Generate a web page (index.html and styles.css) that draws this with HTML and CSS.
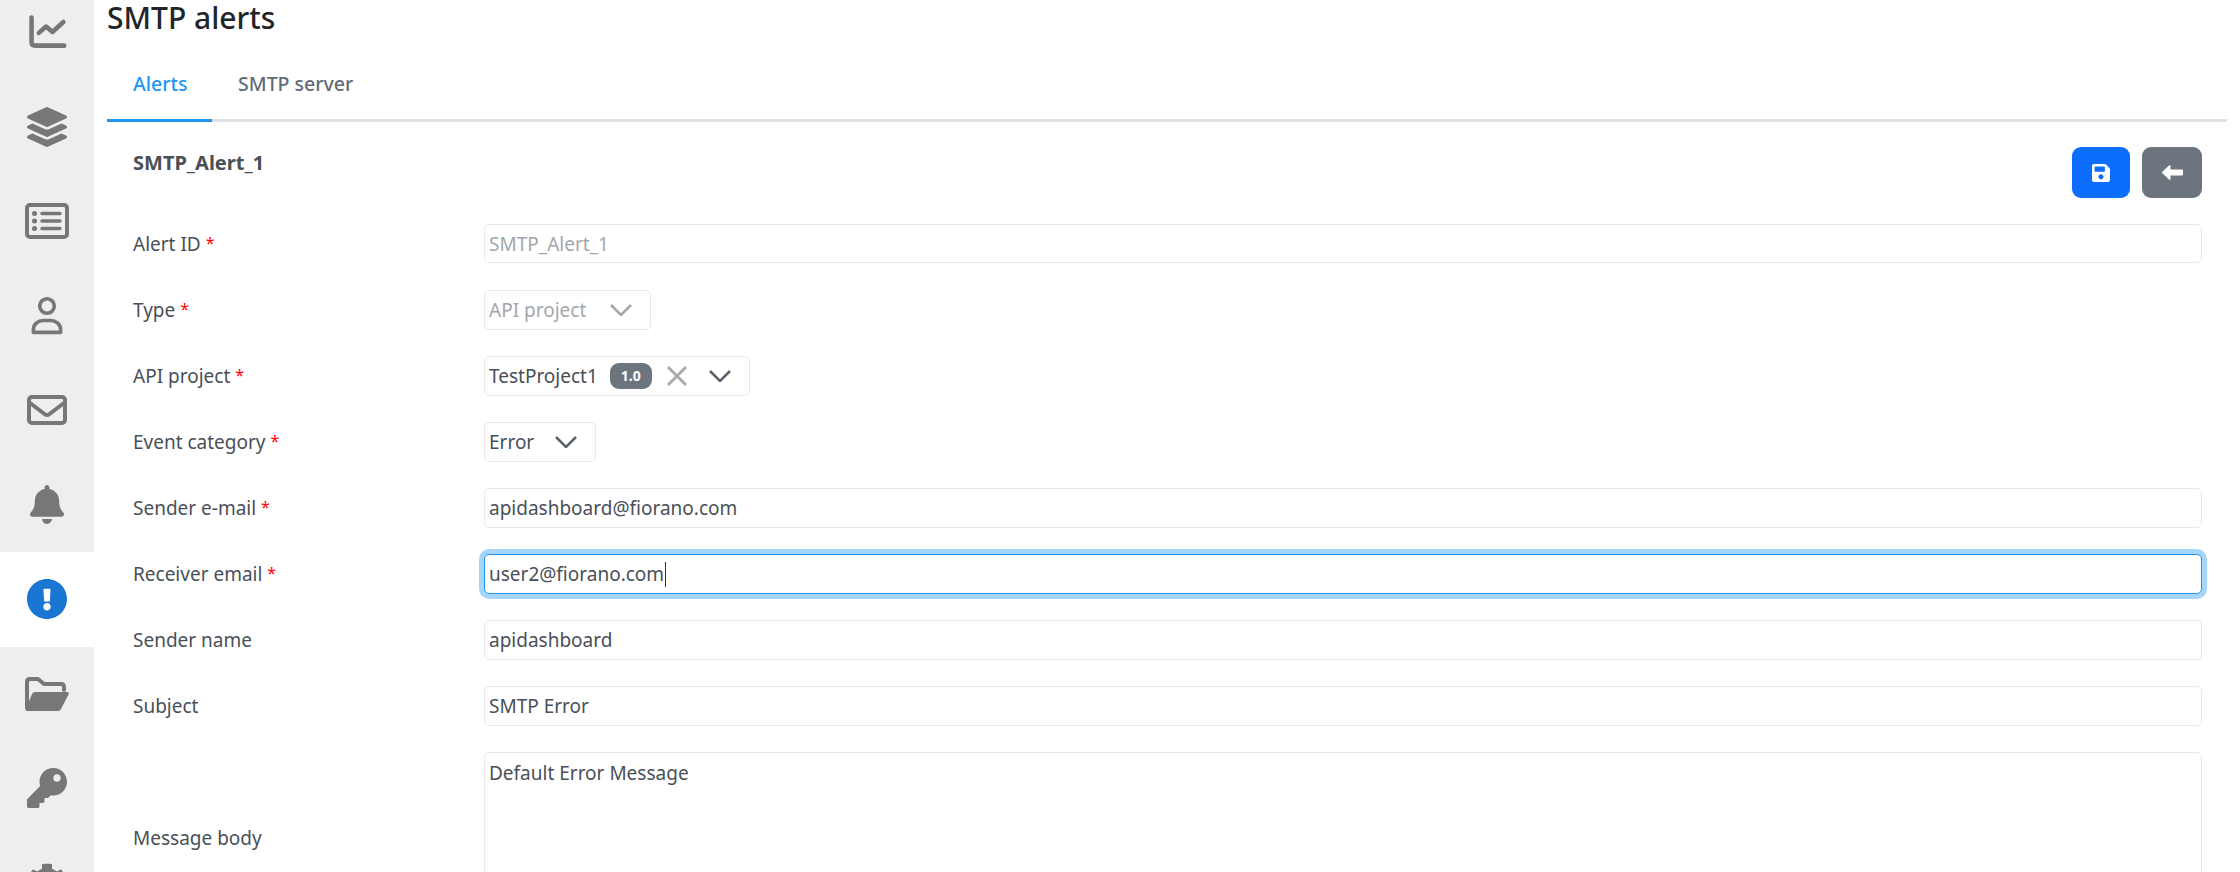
FILE: index.html
```html
<!DOCTYPE html>
<html lang="en">
<head>
<meta charset="utf-8">
<title>SMTP alerts</title>
<link rel="stylesheet" href="styles.css">
</head>
<body>
<div class="app">
  <nav class="sidebar">
    <a class="nav-item"><svg class="ico" viewBox="0 0 44 40"><path class="st" d="M5 4V31q0 4 4 4H41" stroke-width="5"/><path class="st" d="M13 21l8-7 7 6 12-11" stroke-width="5"/></svg></a>
    <a class="nav-item"><svg class="ico" viewBox="0 0 512 512"><path d="M12.41 148.02l232.94 105.67c6.8 3.09 14.49 3.09 21.29 0l232.94-105.67c16.55-7.51 16.55-32.52 0-40.03L266.65 2.31a25.607 25.607 0 0 0-21.29 0L12.41 107.98c-16.55 7.51-16.55 32.53 0 40.04zm487.18 88.28l-58.09-26.33-161.64 73.27c-7.56 3.43-15.59 5.17-23.86 5.17s-16.29-1.74-23.86-5.17L70.51 209.97l-58.1 26.33c-16.55 7.5-16.55 32.5 0 40l232.94 105.59c6.8 3.08 14.49 3.08 21.29 0L499.59 276.3c16.55-7.5 16.55-32.5 0-40zm0 127.8l-57.87-26.23-161.86 73.37c-7.56 3.43-15.59 5.17-23.86 5.17s-16.29-1.74-23.86-5.17L70.29 337.87 12.41 364.1c-16.55 7.5-16.55 32.5 0 40l232.94 105.59c6.8 3.08 14.49 3.08 21.29 0L499.59 404.1c16.55-7.5 16.55-32.5 0-40z"/></svg></a>
    <a class="nav-item"><svg class="ico ico-wide" viewBox="0 0 44 36"><rect class="st" x="2" y="2" width="40" height="32" rx="3" stroke-width="4"/><circle cx="9.5" cy="10.500" r="2.500"/><circle cx="9.5" cy="18" r="2.500"/><circle cx="9.5" cy="25.500" r="2.500"/><path class="st" d="M17 10.500H35M17 18H35M17 25.500H35" stroke-width="3.500"/></svg></a>
    <a class="nav-item"><svg class="ico" viewBox="0 0 44 44"><circle class="st" cx="22" cy="11" r="8" stroke-width="4"/><path class="st" d="M7 40v-3c0-6 5-10 11-10h8c6 0 11 4 11 10v3z" stroke-width="4"/></svg></a>
    <a class="nav-item"><svg class="ico" viewBox="0 0 40 30"><rect class="st" x="2" y="2" width="36" height="26" rx="3" stroke-width="4"/><path class="st" d="M3 8l14.500 11q2.500 2 5 0L37 8" stroke-width="4"/></svg></a>
    <a class="nav-item"><svg class="ico ico-bell" viewBox="0 0 448 512"><path d="M224 512c35.32 0 63.97-28.65 63.97-64H160.03c0 35.35 28.65 64 63.97 64zm215.39-149.71c-19.32-20.76-55.47-51.99-55.47-154.29 0-77.7-54.48-139.9-127.94-155.16V32c0-17.67-14.32-32-31.98-32s-31.98 14.33-31.98 32v20.84C118.56 68.1 64.08 130.3 64.08 208c0 102.3-36.15 133.53-55.47 154.29-6 6.45-8.66 14.16-8.61 21.71.11 16.4 12.98 32 32.1 32h383.8c19.12 0 32-15.6 32.1-32 .05-7.55-2.61-15.27-8.61-21.71z"/></svg></a>
    <a class="nav-item nav-active"><svg class="ico ico-alert" viewBox="8 8 496 496"><path d="M504 256c0 136.997-111.043 248-248 248S8 392.997 8 256C8 119.083 119.043 8 256 8s248 111.083 248 248zm-248 50c-25.405 0-46 20.595-46 46s20.595 46 46 46 46-20.595 46-46-20.595-46-46-46zm-43.673-165.346l7.418 136c.347 6.364 5.609 11.346 11.982 11.346h48.546c6.373 0 11.635-4.982 11.982-11.346l7.418-136c.375-6.874-5.098-12.654-11.982-12.654h-63.383c-6.884 0-12.356 5.78-11.981 12.654z"/></svg></a>
    <a class="nav-item"><svg class="ico ico-wide" viewBox="0 0 44 34"><path class="st" d="M2 31V5q0-3 3-3h8l6 5h17q3 0 3 3v3" stroke-width="4"/><path d="M10 15h32q2.500 0 1.500 2.500L36 32q-1 2-3 2H2q-2 0-1-2.500L7 17q1-2 3-2z"/></svg></a>
    <a class="nav-item"><svg class="ico" viewBox="0 0 512 512"><path d="M512 176.001C512 273.203 433.202 352 336 352c-11.22 0-22.19-1.062-32.827-3.069l-24.012 27.014A23.999 23.999 0 0 1 261.223 384H224v40c0 13.255-10.745 24-24 24h-40v40c0 13.255-10.745 24-24 24H24c-13.255 0-24-10.745-24-24v-78.059c0-6.365 2.529-12.47 7.029-16.971l161.802-161.802C163.108 213.814 160 195.271 160 176 160 78.798 238.797.001 335.999 0 433.488-.001 512 78.511 512 176.001zM336 128c0 26.51 21.49 48 48 48s48-21.49 48-48-21.49-48-48-48-48 21.49-48 48z"/></svg></a>
    <a class="nav-item"><svg class="ico" viewBox="0 0 512 512"><path d="M487.4 315.7l-42.6-24.6c4.3-23.2 4.3-47 0-70.2l42.6-24.6c4.9-2.8 7.1-8.6 5.5-14-11.1-35.6-30-67.8-54.7-94.6-3.8-4.1-10-5.1-14.8-2.3L380.8 110c-17.9-15.4-38.5-27.3-60.8-35.1V25.8c0-5.6-3.9-10.5-9.4-11.7-36.7-8.2-74.3-7.8-109.2 0-5.5 1.2-9.4 6.1-9.4 11.7V75c-22.2 7.9-42.8 19.8-60.8 35.1L88.7 85.5c-4.9-2.8-11-1.9-14.8 2.3-24.7 26.7-43.6 58.9-54.7 94.6-1.7 5.4.6 11.2 5.5 14L67.3 221c-4.3 23.2-4.3 47 0 70.2l-42.6 24.6c-4.9 2.8-7.1 8.6-5.5 14 11.1 35.6 30 67.8 54.7 94.6 3.8 4.1 10 5.1 14.8 2.3l42.6-24.6c17.9 15.4 38.5 27.3 60.8 35.1v49.2c0 5.6 3.9 10.5 9.4 11.7 36.7 8.2 74.3 7.8 109.2 0 5.5-1.2 9.4-6.1 9.4-11.7v-49.2c22.2-7.9 42.8-19.8 60.8-35.1l42.6 24.6c4.9 2.8 11 1.9 14.8-2.3 24.7-26.7 43.6-58.9 54.7-94.6 1.5-5.5-.7-11.3-5.6-14.1zM256 336c-44.1 0-80-35.9-80-80s35.9-80 80-80 80 35.9 80 80-35.9 80-80 80z"/></svg></a>
  </nav>
  <main class="main">
    <h1 class="page-title">SMTP alerts</h1>
    <div class="tabs">
      <a class="tab tab-active">Alerts</a>
      <a class="tab">SMTP server</a>
    </div>
    <section class="panel">
      <header class="panel-head">
        <h2 class="panel-title">SMTP_Alert_1</h2>
        <div class="actions">
          <button class="btn btn-save" type="button"><svg class="btn-ico" viewBox="0 32 448 448"><path d="M433.941 129.941l-83.882-83.882A48 48 0 0 0 316.118 32H48C21.49 32 0 53.49 0 80v352c0 26.51 21.49 48 48 48h352c26.51 0 48-21.49 48-48V163.882a48 48 0 0 0-14.059-33.941zM224 416c-35.346 0-64-28.654-64-64 0-35.346 28.654-64 64-64s64 28.654 64 64c0 35.346-28.654 64-64 64zm96-304.52V212c0 6.627-5.373 12-12 12H76c-6.627 0-12-5.373-12-12V108c0-6.627 5.373-12 12-12h228.52c3.183 0 6.235 1.264 8.485 3.515l3.48 3.48A11.996 11.996 0 0 1 320 111.48z"/></svg></button>
          <button class="btn btn-back" type="button"><svg class="btn-arrow" viewBox="0 0 21 15"><path d="M.4 6.800L7 .5Q8.500-.6 8.500 1.200V4.500H20q1 0 1 1V9.500q0 1-1 1H8.500v3.300Q8.500 15.600 7 14.500L.4 8.200Q-.3 7.500.4 6.800z"/></svg></button>
        </div>
      </header>
      <div class="form">
        <div class="row">
          <div class="label">Alert ID <span class="req">*</span></div>
          <div class="field field-first is-disabled">SMTP_Alert_1</div>
        </div>
        <div class="row">
          <div class="label">Type <span class="req">*</span></div>
          <div class="field select select-type is-disabled"><span>API project</span><svg class="chev chev-off" viewBox="0 0 22 12"><path d="M1 1l10 10L21 1"/></svg></div>
        </div>
        <div class="row">
          <div class="label">API project <span class="req">*</span></div>
          <div class="field select select-project"><span>TestProject1</span><span class="badge">1.0</span><svg class="clear" viewBox="0 0 20 20"><path d="M1 1l18 18M19 1L1 19"/></svg><svg class="chev" viewBox="0 0 22 12"><path d="M1 1l10 10L21 1"/></svg></div>
        </div>
        <div class="row">
          <div class="label">Event category <span class="req">*</span></div>
          <div class="field select select-event"><span>Error</span><svg class="chev" viewBox="0 0 22 12"><path d="M1 1l10 10L21 1"/></svg></div>
        </div>
        <div class="row">
          <div class="label">Sender e-mail <span class="req">*</span></div>
          <div class="field">apidashboard@fiorano.com</div>
        </div>
        <div class="row">
          <div class="label">Receiver email <span class="req">*</span></div>
          <div class="field is-focused">user2@fiorano.com<span class="caret"></span></div>
        </div>
        <div class="row">
          <div class="label">Sender name</div>
          <div class="field">apidashboard</div>
        </div>
        <div class="row">
          <div class="label">Subject</div>
          <div class="field">SMTP Error</div>
        </div>
        <div class="row row-text">
          <div class="label">Message body</div>
          <div class="field textarea">Default Error Message</div>
        </div>
      </div>
    </section>
  </main>
</div>
</body>
</html>
```
FILE: styles.css
```css
* { box-sizing: border-box; }
html, body { margin: 0; height: 872px; overflow: hidden; background: #fff; }
body { font-family: "Noto Sans", "Open Sans", sans-serif; font-size: 19px; color: #495057; }
.app { display: flex; height: 872px; overflow: hidden; }

.sidebar { width: 94px; flex: none; background: #eeeeee; margin-top: -15px; height: 887px; overflow: hidden; display: flex; flex-direction: column; }
.nav-item { height: 94.5px; flex: none; display: flex; align-items: center; justify-content: center; }
.nav-active { background: #fff; }
.ico { width: 40px; height: 40px; fill: #777777; }
.ico-wide { width: 44px; height: 36px; }
.ico-bell { width: 34px; height: 39px; }
.ico-alert { fill: #1976d2; }
.st { fill: none; stroke: #777777; stroke-linecap: round; stroke-linejoin: round; }

.main { flex: 1; min-width: 0; padding: 0 13px; }
.page-title { margin: 0 0 14px; height: 36px; line-height: 35px; font-size: 30px; font-weight: 500; color: #212529; }

.tabs { display: flex; height: 72px; border-bottom: 3px solid #dee2e6; }
.tab { height: 72px; padding: 0 26px; line-height: 68px; font-size: 19.5px; font-weight: 500; color: #5f6b76; border-bottom: 3px solid transparent; }
.tab-active { width: 105px; flex: none; color: #2196f3; border-bottom-color: #2196f3; }

.panel { padding: 25px 25px 0 26px; }
.panel-head { display: flex; justify-content: space-between; align-items: flex-start; height: 51px; margin-bottom: 26px; }
.panel-title { margin: 3px 0 0; font-size: 20px; line-height: 26px; font-weight: 700; color: #495057; }
.actions { display: flex; gap: 12px; }
.btn { height: 51px; border: 0; border-radius: 9px; padding: 0; display: flex; align-items: center; justify-content: center; }
.btn-save { width: 58px; background: #0d6efd; }
.btn-back { width: 60px; background: #6c757d; }
.btn-ico { width: 18px; height: 18px; fill: #fff; }
.btn-arrow { width: 21px; height: 15px; fill: #fff; }

.form { display: flex; flex-direction: column; gap: 26px; }
.row { display: flex; align-items: flex-start; height: 40px; }
.row-text { height: 174px; align-items: center; }
.row-text .label { padding-bottom: 2px; }
.label { width: 351px; flex: none; line-height: 40px; }
.req { color: #ff0000; font-size: 16px; vertical-align: 2.5px; line-height: 1; }
.field { flex: 1; min-width: 0; height: 40px; padding: 0 4px; display: flex; align-items: center; background: #fff; border: 1px solid #e9e9e9; border-radius: 5px; white-space: nowrap; }
.field-first { height: 39px; }
.is-disabled { color: #a3a7ab; }
.is-focused { border-color: #2196f3; box-shadow: 0 0 0 5px #a6d5fa; }
.caret { width: 1px; height: 25px; background: #333; margin-left: 1px; }
.textarea { height: 174px; align-items: flex-start; padding-top: 7px; }

.select { flex: none; padding-right: 18px; }
.select-type { width: 167px; }
.select-project { width: 266px; }
.select-event { width: 112px; }
.chev { width: 22px; height: 12px; margin-left: auto; fill: none; stroke: #5a6570; stroke-width: 2.6; }
.chev-off { stroke: #a3a7ab; }
.badge { margin-left: 12px; width: 42px; height: 26px; line-height: 26px; text-align: center; border-radius: 9px; background: #6c757d; color: #fff; font-size: 14px; font-weight: 700; }
.clear { width: 20px; height: 20px; margin-left: 15px; fill: none; stroke: #a9a9a9; stroke-width: 2.8; }
```
